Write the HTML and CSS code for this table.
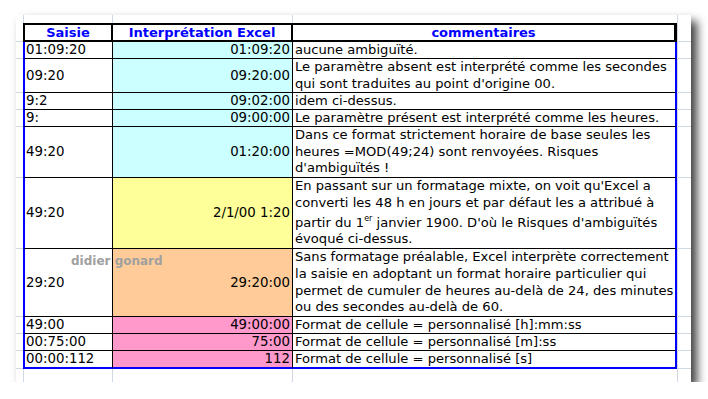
FILE: index.html
```html
<!DOCTYPE html>
<html lang="fr">
<head>
<meta charset="utf-8">
<title>Saisie d'heures</title>
<link rel="stylesheet" href="styles.css">
</head>
<body>
<div class="paper">
  <div class="sheet">
    <div class="row strip"><div class="a"></div><div class="b"></div><div class="c"></div><div class="d"></div><div class="e"></div></div>
    <div class="row hdr"><div class="a"></div><div class="b">Saisie</div><div class="c">Interprétation Excel</div><div class="d">commentaires</div><div class="e"></div></div>
    <div class="row body"><div class="a"></div><div class="b">01:09:20</div><div class="c cyan">01:09:20</div><div class="d"><span>aucune ambiguïté.</span></div><div class="e"></div></div>
    <div class="row body"><div class="a"></div><div class="b">09:20</div><div class="c cyan">09:20:00</div><div class="d multi"><span>Le paramètre absent est interprété comme les secondes<br>qui sont traduites au point d'origine 00.</span></div><div class="e"></div></div>
    <div class="row body"><div class="a"></div><div class="b">9:2</div><div class="c cyan">09:02:00</div><div class="d"><span>idem ci-dessus.</span></div><div class="e"></div></div>
    <div class="row body"><div class="a"></div><div class="b">9:</div><div class="c cyan">09:00:00</div><div class="d"><span>Le paramètre présent est interprété comme les heures.</span></div><div class="e"></div></div>
    <div class="row body"><div class="a"></div><div class="b">49:20</div><div class="c cyan">01:20:00</div><div class="d multi"><span>Dans ce format strictement horaire de base seules les<br>heures =MOD(49;24) sont renvoyées. Risques<br>d'ambiguïtés !</span></div><div class="e"></div></div>
    <div class="row body"><div class="a"></div><div class="b">49:20</div><div class="c yellow">2/1/00 1:20</div><div class="d multi"><span>En passant sur un formatage mixte, on voit qu'Excel a<br>converti les 48 h en jours et par défaut les a attribué à<br>partir du 1<sup>er</sup> janvier 1900. D'où le Risques d'ambiguïtés<br>évoqué ci-dessus.</span></div><div class="e"></div></div>
    <div class="row body"><div class="a"></div><div class="b">29:20</div><div class="c peach">29:20:00</div><div class="d multi"><span>Sans formatage préalable, Excel interprète correctement<br>la saisie en adoptant un format horaire particulier qui<br>permet de cumuler de heures au-delà de 24, des minutes<br>ou des secondes au-delà de 60.</span></div><div class="e"></div></div>
    <div class="row body"><div class="a"></div><div class="b">49:00</div><div class="c pink">49:00:00</div><div class="d"><span>Format de cellule = personnalisé [h]:mm:ss</span></div><div class="e"></div></div>
    <div class="row body"><div class="a"></div><div class="b">00:75:00</div><div class="c pink">75:00</div><div class="d"><span>Format de cellule = personnalisé [m]:ss</span></div><div class="e"></div></div>
    <div class="row body last"><div class="a"></div><div class="b">00:00:112</div><div class="c pink">112</div><div class="d"><span>Format de cellule = personnalisé [s]</span></div><div class="e"></div></div>
    <div class="row strip"><div class="a"></div><div class="b"></div><div class="c"></div><div class="d"></div><div class="e"></div></div>
  </div>
  <span class="wm">didier gonard</span>
</div>
</body>
</html>
```
FILE: styles.css
```css
html, body {
  margin: 0;
  padding: 0;
  background: #ffffff;
}
body {
  padding: 15px 0 0 16px;
}
.paper {
  position: relative;
  width: 675px;
  height: 367px;
  background: #ffffff;
  box-shadow: 6px 6px 9px rgba(0, 0, 0, 0.75);
  overflow: hidden;
}
.sheet {
  display: grid;
  grid-template-columns: 7px 90px 180px 384px 14px;
  grid-template-rows: 8px 19px 17px 34px 17px 17px 51px 71px 68px 17px 17px 18px 13px;
  font-family: "DejaVu Sans", Verdana, sans-serif;
  font-size: 13.33px;
  color: #000;
}
.row { display: contents; }
.sheet .a, .sheet .b, .sheet .c, .sheet .d, .sheet .e {
  box-sizing: border-box;
  min-width: 0;
  white-space: nowrap;
  display: flex;
  align-items: center;
}

/* spreadsheet gridlines outside the table */
.row .a { border-bottom: 1px solid #d0d7e5; }
.row .e { border-left: 1px solid #d0d7e5; border-bottom: 1px solid #d0d7e5; }
.strip .a, .strip .e { border-bottom: none; }
.strip .b { border-left: 1px solid #d0d7e5; border-right: 1px solid #d0d7e5; }
.strip .c { border-right: 1px solid #d0d7e5; }

/* header */
.hdr .b, .hdr .c, .hdr .d {
  border-top: 2px solid #000;
  border-bottom: 2px solid #000;
  border-right: 2px solid #000;
  justify-content: center;
  color: #0000ff;
  font-size: 13px;
  font-weight: bold;
}
.hdr .b { border-left: 2px solid #000; }
.hdr .d { border-right-width: 3px; }

/* body */
.body .b, .body .c, .body .d {
  border-bottom: 1px solid #000;
  line-height: 16px;
}
.body .b {
  border-left: 2px solid #0000ff;
  border-right: 1px solid #000;
  padding-left: 1px;
}
.body .c {
  border-right: 1px solid #000;
  justify-content: flex-end;
  padding-right: 2px;
}
.body .d {
  border-right: 2px solid #0000ff;
  padding-left: 2px;
  font-size: 13.1px;
  overflow: visible;
}
.body .d.multi { line-height: 16.75px; }
.last .b, .last .c, .last .d { border-bottom: 2px solid #0000ff; }

.cyan { background: #ccffff; }
.yellow { background: #ffff99; }
.peach { background: #ffcc99; }
.pink { background: #ff99cc; }

.d sup {
  font-size: 8px;
  line-height: 13.5px;
  vertical-align: 6px;
}

.wm {
  position: absolute;
  left: 55px;
  top: 239px;
  font-family: "DejaVu Sans", Verdana, sans-serif;
  font-size: 12px;
  line-height: 14px;
  font-weight: bold;
  color: #a0a0a0;
}
```
